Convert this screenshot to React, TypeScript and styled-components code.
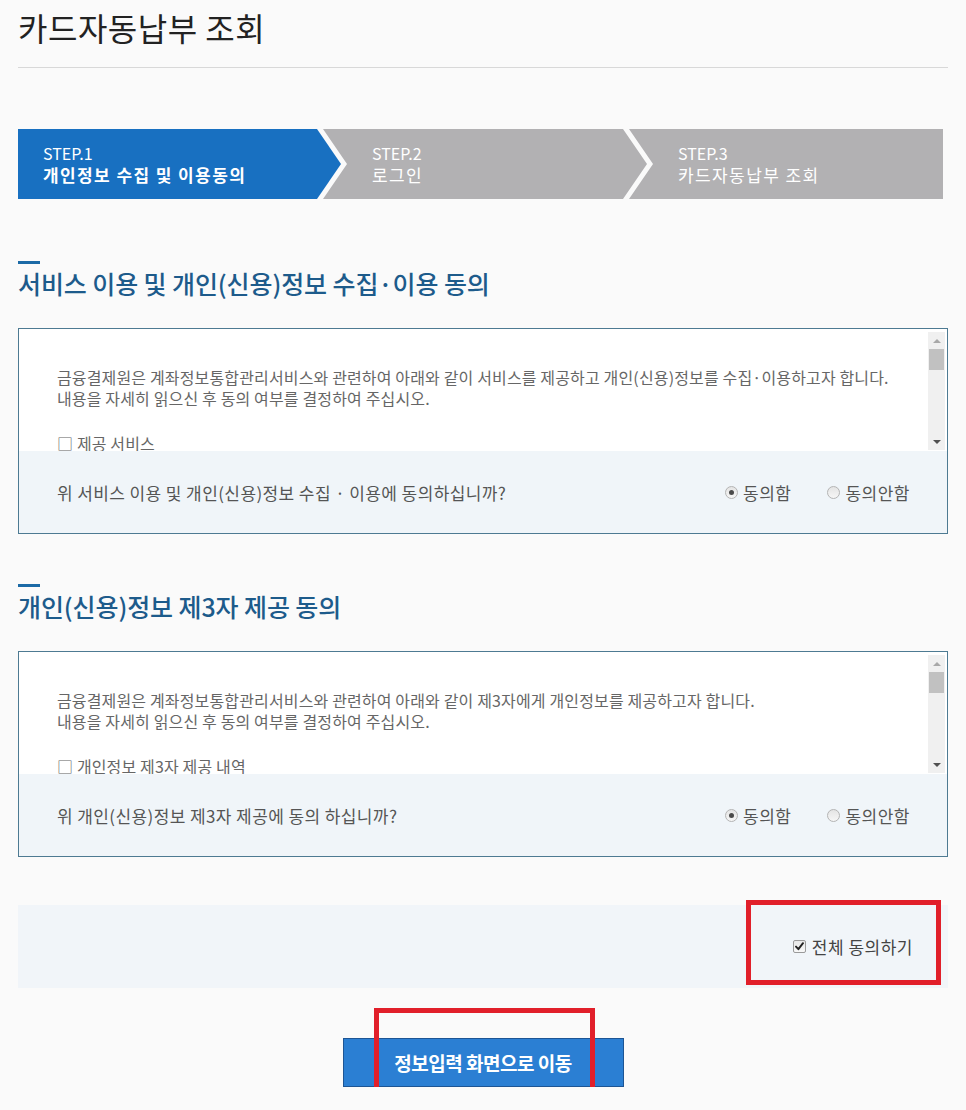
import React from 'react';
import styled, { createGlobalStyle } from 'styled-components';

// --- Global ---
const GlobalStyle = createGlobalStyle`
  html, body {
    margin: 0;
    padding: 0;
    background: #fafafa;
    font-family: 'Noto Sans CJK KR', 'Noto Sans', sans-serif;
  }
  * { box-sizing: border-box; }
`;

// --- Layout ---
const Page = styled.div`
  width: 966px;
  padding: 0 18px;
`;

const PageHeader = styled.header`
  padding: 8px 0 20px;
  border-bottom: 1px solid #d8d8d8;
`;

const PageTitle = styled.h1`
  margin: 0;
  font-size: 32px;
  line-height: 39px;
  font-weight: 400;
  color: #222;
  letter-spacing: 0.5px;
`;

// --- Steps ---
const StepBar = styled.ol`
  display: flex;
  height: 70px;
  margin: 61px 5px 0 0;
  padding: 0;
  list-style: none;
`;

const ARROW = 24;

const Step = styled.li<{ $active?: boolean; $first?: boolean; $last?: boolean; $basis?: number }>`
  flex: ${p => (p.$basis ? `0 0 ${p.$basis}px` : '1')};
  display: flex;
  flex-direction: column;
  justify-content: center;
  margin-left: ${p => (p.$first ? '0' : '-18px')};
  padding-left: ${p => (p.$first ? '25px' : '49px')};
  background: ${p => (p.$active ? '#1870c1' : '#b2b1b3')};
  color: #fff;
  line-height: 22px;
  clip-path: ${p =>
    p.$first
      ? `polygon(0 0, calc(100% - ${ARROW}px) 0, 100% 50%, calc(100% - ${ARROW}px) 100%, 0 100%)`
      : p.$last
      ? `polygon(0 0, 100% 0, 100% 100%, 0 100%, ${ARROW}px 50%)`
      : `polygon(0 0, calc(100% - ${ARROW}px) 0, 100% 50%, calc(100% - ${ARROW}px) 100%, 0 100%, ${ARROW}px 50%)`};
`;

const StepNo = styled.span`
  display: block;
  font-size: 16px;
`;

const StepName = styled.span<{ $active?: boolean }>`
  display: block;
  font-size: 17px;
  letter-spacing: 1.4px;
  font-weight: ${p => (p.$active ? 700 : 400)};
`;

// --- Sections ---
const Section = styled.section<{ $gap: number }>`
  margin-top: ${p => p.$gap}px;
`;

const SectionBar = styled.div`
  width: 22px;
  height: 3px;
  background: #1c6aa6;
`;

const SectionTitle = styled.h2`
  margin: 4px 0 0;
  font-size: 25px;
  line-height: 30px;
  font-weight: 500;
  color: #1d5b8b;
  letter-spacing: -0.1px;
`;

const TermsBox = styled.div`
  margin-top: 30px;
  border: 1px solid #4d7a92;
  background: #fff;
`;

const TermsScroll = styled.div`
  display: flex;
  height: 122px;
`;

const TermsText = styled.div`
  flex: 1;
  overflow: hidden;
  padding: 38px 0 0 38px;
  font-size: 16px;
  line-height: 21px;
  letter-spacing: 0.15px;
  color: #666;

  p {
    margin: 0;
  }
`;

const TermsItem = styled.p`
  && {
    margin-top: 24px;
  }
`;

// --- Fake scrollbar ---
const ScrollTrack = styled.div`
  width: 17px;
  margin: 3px 2px 1px 0;
  background: #f0f0f0;
  display: flex;
  flex-direction: column;
`;

const ScrollButton = styled.div<{ $dir: 'up' | 'down'; $disabled?: boolean }>`
  height: 17px;
  display: flex;
  align-items: center;
  justify-content: center;

  &::before {
    content: '';
    width: 0;
    height: 0;
    border-left: 4px solid transparent;
    border-right: 4px solid transparent;
    ${p =>
      p.$dir === 'up'
        ? `border-bottom: 4px solid ${p.$disabled ? '#a8a8a8' : '#505050'};`
        : `border-top: 4px solid ${p.$disabled ? '#a8a8a8' : '#505050'};`}
  }
`;

const ScrollThumb = styled.div`
  height: 21px;
  margin: 0 1px;
  background: #c1c1c1;
`;

const ScrollSpacer = styled.div`
  flex: 1;
`;

const AgreeRow = styled.div`
  display: flex;
  align-items: center;
  justify-content: space-between;
  height: 82px;
  padding: 0 37px 0 38px;
  background: #f0f5f9;
  font-size: 17px;
  letter-spacing: 0.4px;
  color: #555;
`;

const RadioGroup = styled.div`
  display: flex;
  gap: 36px;
`;

const RadioLabel = styled.label`
  display: flex;
  align-items: center;
  gap: 5px;
  color: #555;
  letter-spacing: 0.5px;
`;

const Radio = styled.span<{ $checked?: boolean }>`
  position: relative;
  width: 13px;
  height: 13px;
  border-radius: 50%;
  border: 1px solid #b4b4b4;
  background: linear-gradient(#e4e4e4, #f6f6f6);

  &::after {
    content: '';
    display: ${p => (p.$checked ? 'block' : 'none')};
    position: absolute;
    left: 3px;
    top: 3px;
    width: 5px;
    height: 5px;
    border-radius: 50%;
    background: #4a4a4a;
  }
`;

// --- All agree ---
const CheckPanel = styled.div`
  position: relative;
  margin-top: 48px;
  height: 83px;
  display: flex;
  align-items: center;
  justify-content: flex-end;
  padding-right: 35px;
  background: #f1f5f9;
`;

const CheckLabel = styled.label`
  display: flex;
  align-items: center;
  gap: 6px;
  font-size: 17px;
  letter-spacing: 0.5px;
  color: #444;
`;

const CheckBox = styled.span`
  display: flex;
  align-items: center;
  justify-content: center;
  width: 13px;
  height: 13px;
  border: 1px solid #9a9a9a;
  border-radius: 2px;
  background: linear-gradient(#e8e8e8, #f8f8f8);
`;

// --- Button ---
const ButtonRow = styled.div`
  margin-top: 50px;
  display: flex;
  justify-content: center;
`;

const ButtonWrap = styled.div`
  position: relative;
`;

const PrimaryButton = styled.button`
  width: 281px;
  height: 49px;
  border: 1px solid #1d5594;
  background: #2b7fd3;
  color: #fff;
  font-family: inherit;
  font-size: 19px;
  font-weight: 700;
  letter-spacing: -0.5px;
  cursor: pointer;
`;

// red annotation boxes drawn over the screenshot
const Annotation = styled.div<{ $top: number; $left?: number; $right?: number; $w: number; $h: number }>`
  position: absolute;
  top: ${p => p.$top}px;
  ${p => (p.$left !== undefined ? `left: ${p.$left}px;` : '')}
  ${p => (p.$right !== undefined ? `right: ${p.$right}px;` : '')}
  width: ${p => p.$w}px;
  height: ${p => p.$h}px;
  border: 5px solid #e11f2a;
  pointer-events: none;
`;

// --- Data ---
const steps = [
  { no: 'STEP.1', name: '개인정보 수집 및 이용동의', active: true, basis: 323 },
  { no: 'STEP.2', name: '로그인', active: false, basis: 324 },
  { no: 'STEP.3', name: '카드자동납부 조회', active: false },
];

const terms = [
  {
    title: '서비스 이용 및 개인(신용)정보 수집·이용 동의',
    lines: [
      '금융결제원은 계좌정보통합관리서비스와 관련하여 아래와 같이 서비스를 제공하고 개인(신용)정보를 수집·이용하고자 합니다.',
      '내용을 자세히 읽으신 후 동의 여부를 결정하여 주십시오.',
    ],
    item: '□ 제공 서비스',
    question: '위 서비스 이용 및 개인(신용)정보 수집 · 이용에 동의하십니까?',
    gap: 62,
  },
  {
    title: '개인(신용)정보 제3자 제공 동의',
    lines: [
      '금융결제원은 계좌정보통합관리서비스와 관련하여 아래와 같이 제3자에게 개인정보를 제공하고자 합니다.',
      '내용을 자세히 읽으신 후 동의 여부를 결정하여 주십시오.',
    ],
    item: '□ 개인정보 제3자 제공 내역',
    question: '위 개인(신용)정보 제3자 제공에 동의 하십니까?',
    gap: 50,
  },
];

const CheckIcon = () => (
  <svg width="9" height="9" viewBox="0 0 9 9">
    <path d="M1 4.6 L3.4 7.2 L8 1.2" fill="none" stroke="#222" strokeWidth="1.9" strokeLinecap="round" strokeLinejoin="round" />
  </svg>
);

export default function App() {
  return (
    <>
      <GlobalStyle />
      <Page>
        <PageHeader>
          <PageTitle>카드자동납부 조회</PageTitle>
        </PageHeader>

        <StepBar>
          {steps.map((s, i) => (
            <Step
              key={s.no}
              $active={s.active}
              $first={i === 0}
              $last={i === steps.length - 1}
              $basis={s.basis}
            >
              <StepNo>{s.no}</StepNo>
              <StepName $active={s.active}>{s.name}</StepName>
            </Step>
          ))}
        </StepBar>

        {terms.map(t => (
          <Section key={t.title} $gap={t.gap}>
            <SectionBar />
            <SectionTitle>{t.title}</SectionTitle>
            <TermsBox>
              <TermsScroll>
                <TermsText>
                  {t.lines.map(l => (
                    <p key={l}>{l}</p>
                  ))}
                  <TermsItem>{t.item}</TermsItem>
                </TermsText>
                <ScrollTrack>
                  <ScrollButton $dir="up" $disabled />
                  <ScrollThumb />
                  <ScrollSpacer />
                  <ScrollButton $dir="down" />
                </ScrollTrack>
              </TermsScroll>
              <AgreeRow>
                <span>{t.question}</span>
                <RadioGroup>
                  <RadioLabel>
                    <Radio $checked />
                    동의함
                  </RadioLabel>
                  <RadioLabel>
                    <Radio />
                    동의안함
                  </RadioLabel>
                </RadioGroup>
              </AgreeRow>
            </TermsBox>
          </Section>
        ))}

        <CheckPanel>
          <CheckLabel>
            <CheckBox>
              <CheckIcon />
            </CheckBox>
            전체 동의하기
          </CheckLabel>
          <Annotation $top={-5} $right={7} $w={195} $h={85} />
        </CheckPanel>

        <ButtonRow>
          <ButtonWrap>
            <PrimaryButton type="button">정보입력 화면으로 이동</PrimaryButton>
            <Annotation $top={-30} $left={31} $w={221} $h={93} />
          </ButtonWrap>
        </ButtonRow>
      </Page>
    </>
  );
}
